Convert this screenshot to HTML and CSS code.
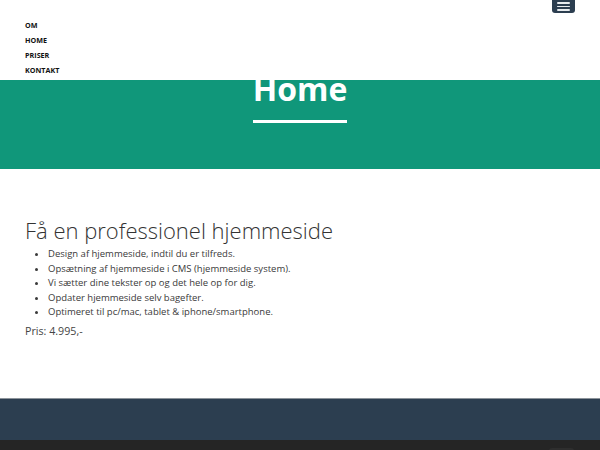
FILE: index.html
```html
<!DOCTYPE html>
<html lang="da">
<head>
<meta charset="utf-8">
<title>Home</title>
<link rel="stylesheet" href="styles.css">
</head>
<body>
<nav class="navbar">
  <button class="toggle" aria-label="Menu">
    <span class="bar"></span><span class="bar"></span><span class="bar"></span>
  </button>
  <ul class="menu">
    <li><a href="#">OM</a></li>
    <li><a href="#">HOME</a></li>
    <li><a href="#">PRISER</a></li>
    <li><a href="#">KONTAKT</a></li>
  </ul>
</nav>
<header class="hero">
  <h1 class="hero-title">Home</h1>
  <hr class="hero-line">
</header>
<main class="content">
  <h2 class="title">Få en professionel hjemmeside</h2>
  <ul class="features">
    <li>Design af hjemmeside, indtil du er tilfreds.</li>
    <li>Opsætning af hjemmeside i CMS (hjemmeside system).</li>
    <li>Vi sætter dine tekster op og det hele op for dig.</li>
    <li>Opdater hjemmeside selv bagefter.</li>
    <li>Optimeret til pc/mac, tablet &amp; iphone/smartphone.</li>
  </ul>
  <p class="price">Pris: 4.995,-</p>
</main>
<footer class="footer">
  <div class="footer-above"></div>
  <div class="footer-below"></div>
</footer>
<a class="scroll-top" href="#" aria-label="Til toppen"></a>
</body>
</html>
```
FILE: styles.css
```css
* { box-sizing: border-box; }
html, body { margin: 0; padding: 0; }
body {
  font-family: "Open Sans", "Liberation Sans", sans-serif;
  color: #333;
  background: #fff;
}
.navbar {
  height: 80px;
  background: #fff;
  padding: 15px 25px 0;
  display: flex;
  flex-direction: column;
}
.toggle {
  position: absolute;
  top: -4px;
  left: 552px;
  width: 23px;
  height: 17px;
  background: #2c3e50;
  border: 0;
  border-radius: 3px;
  padding: 6px 5px 0;
  display: flex;
  flex-direction: column;
  gap: 2px;
}
.toggle .bar {
  display: block;
  width: 13px;
  height: 1.5px;
  background: #e8ecef;
  border-radius: 1px;
}
.menu {
  list-style: none;
  margin: 0;
  padding: 0;
}
.menu li {
  height: 15px;
  line-height: 15px;
}
.menu a {
  color: #111;
  font-size: 7.2px;
  font-weight: 700;
  text-decoration: none;
}
.hero {
  background: #10977a;
  height: 89px;
  display: flex;
  flex-direction: column;
  align-items: center;
}
.hero-title {
  margin: -11px 0 0;
  color: #fff;
  font-size: 32px;
  font-weight: 700;
  line-height: 40px;
}
.hero-line {
  width: 94px;
  margin: 11px 0 0;
  border: 0;
  height: 3px;
  background: #fff;
}
.content {
  height: 229px;
  padding: 46px 25px 0;
}
.title {
  margin: 0;
  font-size: 22px;
  font-weight: 300;
  line-height: 30px;
  color: #333;
}
.features {
  margin: 2px 0 0;
  padding: 0 0 0 23px;
  font-size: 9.5px;
  line-height: 14.6px;
  color: #3a3a3a;
}
.price {
  margin: 3px 0 0;
  font-size: 10.7px;
  line-height: 16px;
  color: #444;
}
.footer-above {
  height: 42px;
  background: #2c3e50;
  border-top: 1px solid #8c939a;
}
.footer-below {
  height: 12px;
  background: #252525;
}
.scroll-top {
  position: absolute;
  top: 448px;
  left: 549px;
  width: 25px;
  height: 20px;
  border-radius: 3px;
  background: #2e2e2e;
}
```
